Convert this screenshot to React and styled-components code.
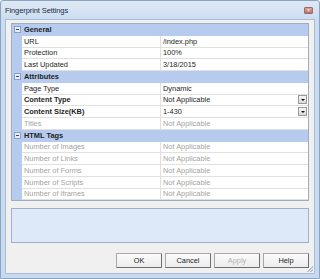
import React from 'react';
import styled, { createGlobalStyle } from 'styled-components';

const GlobalStyle = createGlobalStyle`
  html, body {
    margin: 0;
    padding: 0;
    background: #ffffff;
  }
  body {
    font-family: "Liberation Sans", Arial, sans-serif;
  }
`;

const Window = styled.div`
  width: 320px;
  height: 279px;
  box-sizing: border-box;
  border: 1px solid #8aa3c0;
  border-radius: 3px 3px 0 0;
  background: linear-gradient(#dfe9f5, #cadcf1 20px, #c8daf0);
  display: flex;
  flex-direction: column;
  padding: 0 4px 4px 4px;
`;

const TitleBar = styled.div`
  height: 18px;
  display: flex;
  align-items: center;
  justify-content: space-between;
`;

const Title = styled.span`
  font-size: 7.5px;
  color: #1b2c44;
  letter-spacing: -0.1px;
`;

const CloseButton = styled.div`
  width: 7px;
  height: 5px;
  margin-right: 2px;
  border: 1px solid #9a6c68;
  border-radius: 1px;
  background: linear-gradient(#d9a39c, #bd7068);
  display: flex;
  align-items: center;
  justify-content: center;
  color: #fff;
  font-size: 5px;
  line-height: 1;
`;

const Client = styled.div`
  flex: 1;
  background: #f0f0f0;
  border: 1px solid #a9bcd2;
  display: flex;
  flex-direction: column;
  padding: 3px 5px 5px 5px;
  position: relative;
`;

const Grid = styled.div`
  border: 1px solid #a0adbc;
  background: #ffffff;
  display: flex;
  flex-direction: column;
`;

const Row = styled.div`
  height: 11.75px;
  display: grid;
  grid-template-columns: 10px 139px 1fr;
  font-size: 7.4px;
  color: #1e1e1e;
`;

const Margin = styled.div`
  background: #b7cbef;
  display: flex;
  align-items: center;
  justify-content: center;
`;

const Toggle = styled.div`
  width: 5px;
  height: 5px;
  border: 1px solid #8b9fc4;
  background: #e6edf9;
  display: flex;
  align-items: center;
  justify-content: center;
  &::after {
    content: '';
    width: 3px;
    height: 1px;
    background: #3a4d6e;
  }
`;

const CategoryLabel = styled.div`
  grid-column: 2 / 4;
  background: #b7cbef;
  font-weight: bold;
  display: flex;
  align-items: center;
  padding-left: 2px;
`;

const Cell = styled.div`
  display: flex;
  align-items: center;
  padding-left: 2px;
  border-bottom: 1px solid #e0e0e0;
  box-sizing: border-box;
  white-space: nowrap;
  overflow: hidden;
  color: ${({ $disabled }) => ($disabled ? '#a3a3a3' : '#1e1e1e')};
  font-weight: ${({ $bold }) => ($bold ? 'bold' : 'normal')};
`;

const NameCell = styled(Cell)`
  border-right: 1px solid #e0e0e0;
`;

const ValueCell = styled(Cell)`
  justify-content: space-between;
  padding-right: 1px;
`;

const DropButton = styled.div`
  width: 9px;
  height: 9px;
  box-sizing: border-box;
  border: 1px solid #9a9a9a;
  background: linear-gradient(#f6f6f6, #d9d9d9);
  display: flex;
  align-items: center;
  justify-content: center;
  &::after {
    content: '';
    border-left: 2px solid transparent;
    border-right: 2px solid transparent;
    border-top: 2px solid #111;
  }
`;

const Description = styled.div`
  margin-top: 7px;
  height: 35px;
  box-sizing: border-box;
  border: 1px solid #9fb0c6;
  background: #dde9f8;
`;

const ButtonBar = styled.div`
  margin-top: auto;
  display: flex;
  justify-content: flex-end;
  gap: 3px;
  padding-bottom: 0;
`;

const Button = styled.div`
  width: 46px;
  height: 15px;
  box-sizing: border-box;
  border: 1px solid #a8a8a8;
  border-right-color: #6f6f6f;
  border-bottom-color: #6f6f6f;
  border-radius: 1px;
  background: linear-gradient(#fbfbfb, #ececec);
  font-size: 7.4px;
  color: ${({ $disabled }) => ($disabled ? '#b3b3b3' : '#1e1e1e')};
  display: flex;
  align-items: center;
  justify-content: center;
`;

const Grip = styled.div`
  position: absolute;
  right: 1px;
  bottom: 1px;
  width: 6px;
  height: 6px;
  background: linear-gradient(135deg, transparent 50%, #b9c3cf 50%, #b9c3cf 60%, transparent 60%, transparent 75%, #b9c3cf 75%, #b9c3cf 85%, transparent 85%);
`;

const sections = [
  {
    name: 'General',
    rows: [
      { name: 'URL', value: '/index.php' },
      { name: 'Protection', value: '100%' },
      { name: 'Last Updated', value: '3/18/2015' },
    ],
  },
  {
    name: 'Attributes',
    rows: [
      { name: 'Page Type', value: 'Dynamic' },
      { name: 'Content Type', value: 'Not Applicable', bold: true, drop: true },
      { name: 'Content Size(KB)', value: '1-430', bold: true, drop: true },
      { name: 'Titles', value: 'Not Applicable', disabled: true },
    ],
  },
  {
    name: 'HTML Tags',
    rows: [
      { name: 'Number of Images', value: 'Not Applicable', disabled: true },
      { name: 'Number of Links', value: 'Not Applicable', disabled: true },
      { name: 'Number of Forms', value: 'Not Applicable', disabled: true },
      { name: 'Number of Scripts', value: 'Not Applicable', disabled: true },
      { name: 'Number of iframes', value: 'Not Applicable', disabled: true },
    ],
  },
];

export default function App() {
  return (
    <>
      <GlobalStyle />
      <Window>
        <TitleBar>
          <Title>Fingerprint Settings</Title>
          <CloseButton>×</CloseButton>
        </TitleBar>
        <Client>
          <Grid>
            {sections.map((section) => (
              <React.Fragment key={section.name}>
                <Row>
                  <Margin>
                    <Toggle />
                  </Margin>
                  <CategoryLabel>{section.name}</CategoryLabel>
                </Row>
                {section.rows.map((row) => (
                  <Row key={row.name}>
                    <Margin />
                    <NameCell $disabled={row.disabled} $bold={row.bold}>
                      {row.name}
                    </NameCell>
                    <ValueCell $disabled={row.disabled}>
                      <span>{row.value}</span>
                      {row.drop && <DropButton />}
                    </ValueCell>
                  </Row>
                ))}
              </React.Fragment>
            ))}
          </Grid>
          <Description />
          <ButtonBar>
            <Button>OK</Button>
            <Button>Cancel</Button>
            <Button $disabled>Apply</Button>
            <Button>Help</Button>
          </ButtonBar>
          <Grip />
        </Client>
      </Window>
    </>
  );
}
